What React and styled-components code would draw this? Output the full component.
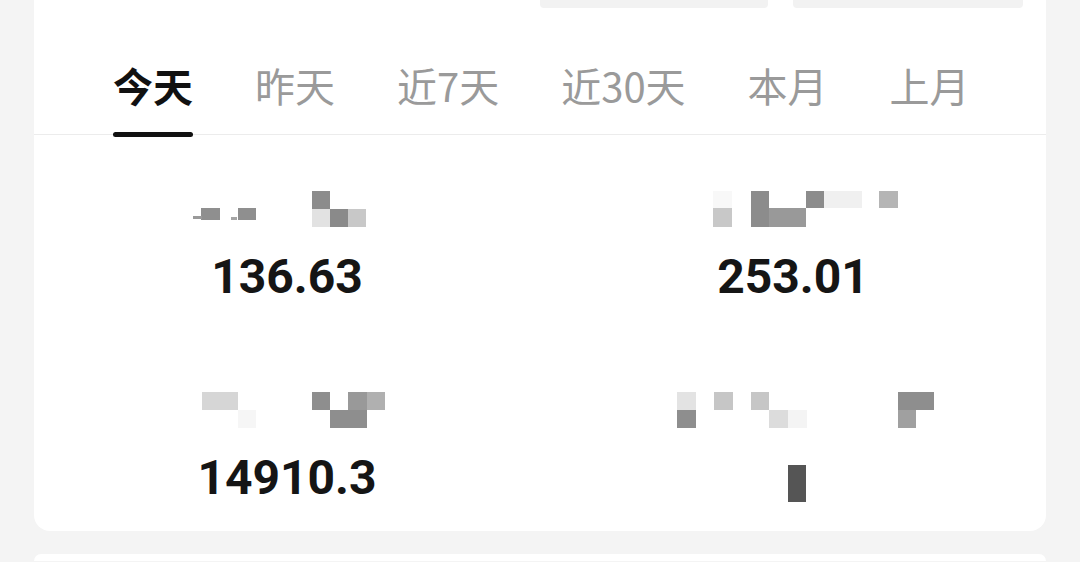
import React from "react";
import styled, { createGlobalStyle } from "styled-components";

const GlobalStyle = createGlobalStyle`
    html, body {
        margin: 0;
        padding: 0;
        background: #f4f4f4;
    }
    body {
        font-family: Roboto, "Noto Sans CJK SC", sans-serif;
        width: 1080px;
        height: 562px;
        overflow: hidden;
    }
`;

const Page = styled.div`
    padding: 0 34px;
    display: flex;
    flex-direction: column;
`;

const Card = styled.div`
    background: #ffffff;
    border-radius: 0 0 16px 16px;
    display: flex;
    flex-direction: column;
`;

const TopStrip = styled.div`
    height: 8px;
    display: flex;
    justify-content: flex-end;
    gap: 25px;
    padding-right: 23px;
`;

const StripButton = styled.div`
    width: ${(p) => p.$w}px;
    height: 8px;
    background: #f2f2f2;
    border-radius: 0 0 4px 4px;
`;

const Tabs = styled.div`
    height: 127px;
    box-sizing: border-box;
    display: flex;
    align-items: flex-end;
    gap: 62px;
    padding-left: 79px;
    border-bottom: 1px solid #ececec;
`;

const Tab = styled.div`
    position: relative;
    font-family: "Noto Sans CJK SC", sans-serif;
    font-size: 40px;
    line-height: 56px;
    padding-bottom: 21px;
    color: ${(p) => (p.$active ? "#111111" : "#9a9a9a")};
    font-weight: ${(p) => (p.$active ? 700 : 400)};

    &::after {
        content: "";
        display: ${(p) => (p.$active ? "block" : "none")};
        position: absolute;
        left: 0;
        right: 0;
        bottom: -3px;
        height: 5px;
        border-radius: 3px;
        background: #111111;
    }
`;

const Grid = styled.div`
    display: grid;
    grid-template-columns: 1fr 1fr;
    row-gap: 91px;
    padding: 56px 0 29px;
`;

const Stat = styled.div`
    display: flex;
    flex-direction: column;
    align-items: center;
    gap: 25px;
`;

const Value = styled.div`
    font-family: Roboto, "Liberation Sans", sans-serif;
    font-weight: 700;
    font-size: 48px;
    line-height: 48px;
    height: 48px;
    color: #151515;
`;

const NextCard = styled.div`
    margin-top: 23px;
    height: 7px;
    background: #ffffff;
    border-radius: 16px 16px 0 0;
`;

// pixelated (mosaic) labels, drawn as cells
const Mosaic = ({ cells, width = 300, height = 37 }) => (
    <svg width={width} height={height} viewBox={`0 0 ${width} ${height}`}>
        {cells.map(([x, y, w, h, c], i) => (
            <rect key={i} x={x} y={y} width={w} height={h} fill={c} />
        ))}
    </svg>
);

const labels = {
    a: [
        [64, 17, 19, 12, "#8f8f8f"],
        [56, 25, 9, 3, "#9a9a9a"],
        [101, 17, 18, 12, "#8f8f8f"],
        [94, 26, 6, 3, "#a5a5a5"],
        [175, 0, 18, 18, "#8c8c8c"],
        [175, 18, 18, 18, "#e2e2e2"],
        [193, 18, 18, 18, "#8a8a8a"],
        [211, 18, 18, 18, "#c8c8c8"],
    ],
    b: [
        [70, 0, 19, 17, "#f8f8f8"],
        [70, 17, 19, 19, "#c8c8c8"],
        [108, 0, 18, 36, "#8c8c8c"],
        [126, 17, 37, 19, "#999999"],
        [163, 0, 18, 17, "#8c8c8c"],
        [181, 0, 38, 17, "#f0f0f0"],
        [236, 0, 19, 17, "#b5b5b5"],
    ],
    c: [
        [65, 0, 36, 18, "#d6d6d6"],
        [101, 18, 18, 18, "#f6f6f6"],
        [175, 0, 18, 18, "#8e8e8e"],
        [193, 18, 37, 18, "#8e8e8e"],
        [211, 0, 19, 18, "#999999"],
        [230, 0, 18, 18, "#b0b0b0"],
    ],
    d: [
        [34, 0, 19, 18, "#e3e3e3"],
        [34, 18, 19, 18, "#8e8e8e"],
        [71, 0, 19, 18, "#c6c6c6"],
        [108, 0, 18, 18, "#c6c6c6"],
        [126, 18, 19, 18, "#dcdcdc"],
        [145, 18, 19, 18, "#f4f4f4"],
        [255, 0, 36, 18, "#8e8e8e"],
        [255, 18, 18, 18, "#a0a0a0"],
    ],
};

const tabs = ["今天", "昨天", "近7天", "近30天", "本月", "上月"];

const stats = [
    { label: labels.a, value: "136.63" },
    { label: labels.b, value: "253.01" },
    { label: labels.c, value: "14910.3" },
    { label: labels.d, hidden: [[13, 11, 18, 37, "#555555"]] },
];

const App = () => {
    return (
        <Page>
            <GlobalStyle />
            <Card>
                <TopStrip>
                    <StripButton $w={228} />
                    <StripButton $w={230} />
                </TopStrip>
                <Tabs>
                    {tabs.map((t, i) => (
                        <Tab key={t} $active={i === 0}>
                            {t}
                        </Tab>
                    ))}
                </Tabs>
                <Grid>
                    {stats.map((s, i) => (
                        <Stat key={i}>
                            <Mosaic cells={s.label} />
                            {s.hidden ? (
                                <Mosaic cells={s.hidden} width={36} height={48} />
                            ) : (
                                <Value>{s.value}</Value>
                            )}
                        </Stat>
                    ))}
                </Grid>
            </Card>
            <NextCard />
        </Page>
    );
};

export default App;
